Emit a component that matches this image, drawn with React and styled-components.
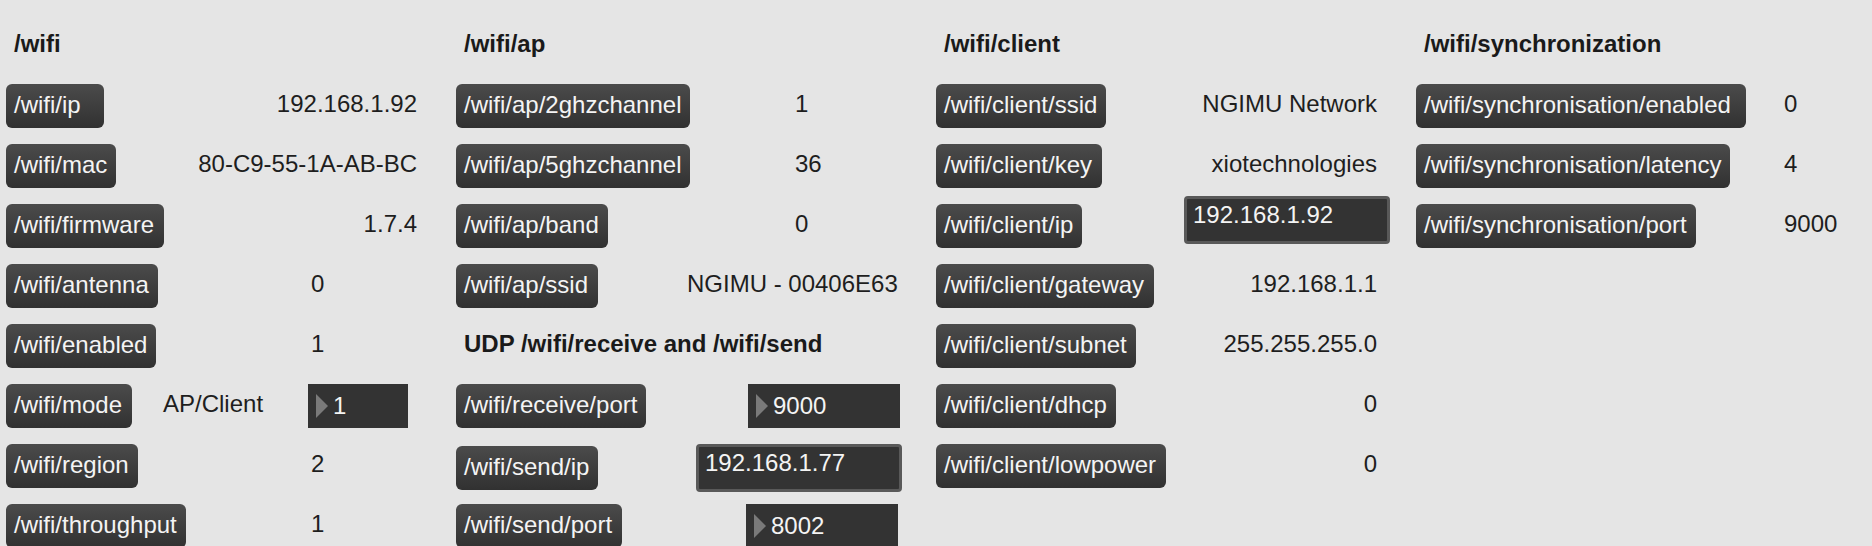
import styled, { createGlobalStyle } from 'styled-components';

const GlobalStyle = createGlobalStyle`
   html, body {
      margin: 0;
      padding: 0;
      background: #e5e5e5;
      overflow: hidden;
   }
   body {
      font-family: "Liberation Sans", Arial, sans-serif;
   }
`;

// Data for the four panels
const wifi = [
   { label: '/wifi/ip', w: 98, value: '192.168.1.92', cols: 'auto 1fr', end: true },
   { label: '/wifi/mac', w: 110, value: '80-C9-55-1A-AB-BC', cols: 'auto 1fr', end: true },
   { label: '/wifi/firmware', w: 158, value: '1.7.4', cols: 'auto 1fr', end: true },
   { label: '/wifi/antenna', w: 152, value: '0', cols: '305px auto' },
   { label: '/wifi/enabled', w: 150, value: '1', cols: '305px auto' },
   { label: '/wifi/mode', w: 126, value: 'AP/Client', cols: '157px 145px auto', number: { w: 100, value: '1' } },
   { label: '/wifi/region', w: 132, value: '2', cols: '305px auto' },
   { label: '/wifi/throughput', w: 180, value: '1', cols: '305px auto' },
];

const ap = [
   { label: '/wifi/ap/2ghzchannel', w: 234, value: '1', cols: '339px auto' },
   { label: '/wifi/ap/5ghzchannel', w: 234, value: '36', cols: '339px auto' },
   { label: '/wifi/ap/band', w: 152, value: '0', cols: '339px auto' },
   { label: '/wifi/ap/ssid', w: 142, value: 'NGIMU - 00406E63', cols: '231px auto' },
];

const udp = [
   { label: '/wifi/receive/port', w: 190, cols: '292px 152px', number: { w: 152, value: '9000' } },
   { label: '/wifi/send/ip', w: 142, cols: '240px 206px', text: { w: 206, value: '192.168.1.77' } },
   { label: '/wifi/send/port', w: 166, cols: '290px 152px', number: { w: 152, value: '8002' } },
];

const client = [
   { label: '/wifi/client/ssid', w: 170, value: 'NGIMU Network', cols: 'auto 1fr', end: true },
   { label: '/wifi/client/key', w: 166, value: 'xiotechnologies', cols: 'auto 1fr', end: true },
   { label: '/wifi/client/ip', w: 146, cols: '248px 206px', text: { w: 206, value: '192.168.1.92', shift: -6 } },
   { label: '/wifi/client/gateway', w: 218, value: '192.168.1.1', cols: 'auto 1fr', end: true },
   { label: '/wifi/client/subnet', w: 200, value: '255.255.255.0', cols: 'auto 1fr', end: true },
   { label: '/wifi/client/dhcp', w: 180, value: '0', cols: 'auto 1fr', end: true },
   { label: '/wifi/client/lowpower', w: 230, value: '0', cols: 'auto 1fr', end: true },
];

const sync = [
   { label: '/wifi/synchronisation/enabled', w: 330, value: '0', cols: '368px auto' },
   { label: '/wifi/synchronisation/latency', w: 314, value: '4', cols: '368px auto' },
   { label: '/wifi/synchronisation/port', w: 280, value: '9000', cols: '368px auto' },
];

const ParamRow = ({ item }) => (
   <Row $cols={item.cols}>
      <MessageBtn $w={item.w}>{item.label}</MessageBtn>
      {item.value !== undefined && <Value $end={item.end}>{item.value}</Value>}
      {item.number && (
         <NumberBox $w={item.number.w}>
            <Arrow />
            {item.number.value}
         </NumberBox>
      )}
      {item.text && (
         <TextBox $w={item.text.w} $shift={item.text.shift}>
            {item.text.value}
         </TextBox>
      )}
   </Row>
);

export default function App() {
   return (
      <>
         <GlobalStyle />
         <Page>
            <Column $w={450}>
               <Heading>/wifi</Heading>
               {wifi.map((item) => (
                  <ParamRow key={item.label} item={item} />
               ))}
            </Column>
            <Column $w={480}>
               <Heading>/wifi/ap</Heading>
               {ap.map((item) => (
                  <ParamRow key={item.label} item={item} />
               ))}
               <Heading>UDP /wifi/receive and /wifi/send</Heading>
               {udp.map((item) => (
                  <ParamRow key={item.label} item={item} />
               ))}
            </Column>
            <Column $w={480}>
               <Heading>/wifi/client</Heading>
               {client.map((item) => (
                  <ParamRow key={item.label} item={item} />
               ))}
            </Column>
            <Column>
               <Heading>/wifi/synchronization</Heading>
               {sync.map((item) => (
                  <ParamRow key={item.label} item={item} />
               ))}
            </Column>
         </Page>
      </>
   );
}

const Page = styled.main`
   display: flex;
   align-items: flex-start;
   padding: 24px 0 0 6px;
   height: 546px;
   box-sizing: border-box;
`;

const Column = styled.section`
   display: flex;
   flex-direction: column;
   gap: 16px;
   width: ${(p) => (p.$w ? `${p.$w}px` : 'auto')};
   flex: ${(p) => (p.$w ? 'none' : '1')};
   padding-right: 39px;
   box-sizing: border-box;
`;

const Heading = styled.h3`
   margin: 0;
   height: 44px;
   line-height: 40px;
   padding-left: 8px;
   font-size: 24px;
   font-weight: 700;
   color: #1a1a1a;
   white-space: nowrap;
`;

const Row = styled.div`
   display: grid;
   grid-template-columns: ${(p) => p.$cols};
   align-items: center;
   height: 44px;
`;

const MessageBtn = styled.div`
   width: ${(p) => p.$w}px;
   height: 44px;
   line-height: 41px;
   box-sizing: border-box;
   padding-left: 8px;
   border-radius: 6px;
   background: linear-gradient(#4b4b4b, #313131);
   color: #f4f4f4;
   font-size: 24px;
   white-space: nowrap;
   overflow: hidden;
`;

const Value = styled.span`
   align-self: start;
   justify-self: ${(p) => (p.$end ? 'end' : 'start')};
   font-size: 24px;
   line-height: 40px;
   color: #1e1e1e;
   white-space: nowrap;
`;

const NumberBox = styled.div`
   width: ${(p) => p.$w}px;
   height: 44px;
   box-sizing: border-box;
   display: flex;
   align-items: center;
   gap: 5px;
   padding: 0 0 1px 8px;
   background: #333333;
   color: #f4f4f4;
   font-size: 24px;
   line-height: 40px;
`;

const Arrow = styled.span`
   width: 0;
   height: 0;
   margin-top: 1px;
   border-left: 12px solid #7a7a7a;
   border-top: 12px solid transparent;
   border-bottom: 12px solid transparent;
`;

const TextBox = styled.div`
   width: ${(p) => p.$w}px;
   height: 48px;
   box-sizing: border-box;
   margin-top: ${(p) => (p.$shift ? `${p.$shift * 2}px` : '0')};
   padding: 2px 6px 0;
   border: 3px solid #595959;
   border-radius: 4px;
   background: #333333;
   color: #f4f4f4;
   font-size: 24px;
   line-height: 28px;
   white-space: nowrap;
`;
